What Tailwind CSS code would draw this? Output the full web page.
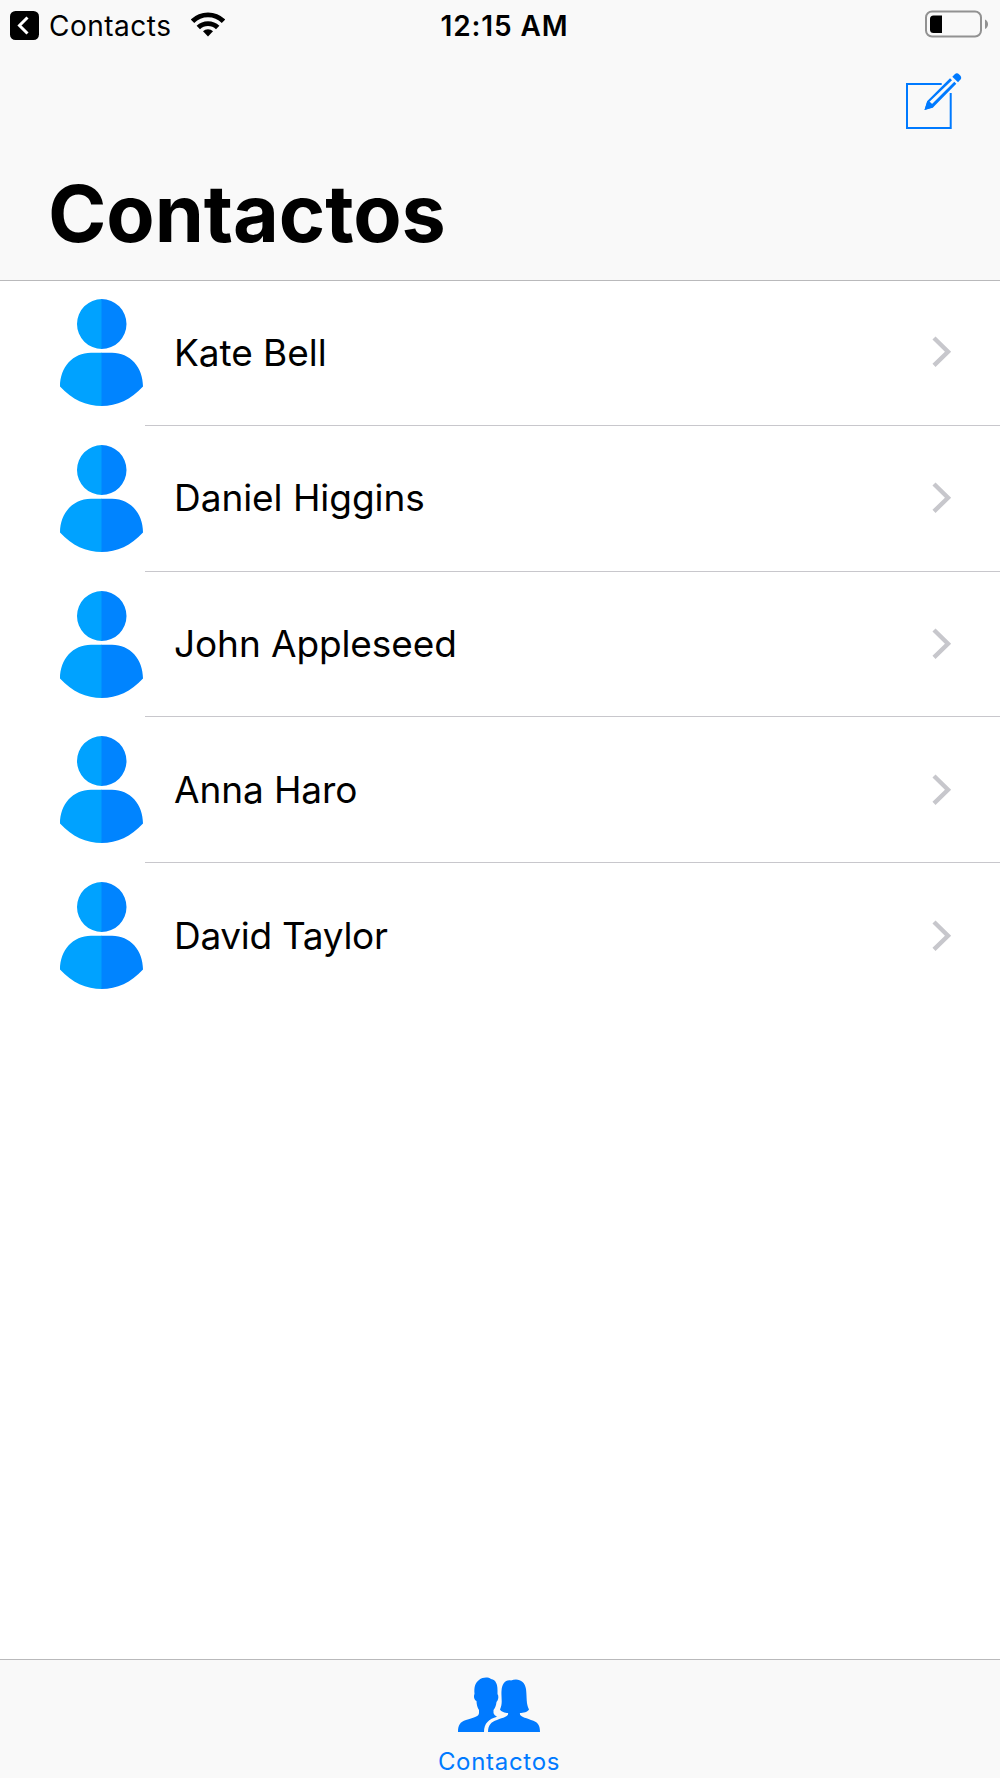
<!DOCTYPE html>
<html lang="es">
<head>
    <meta charset="UTF-8">
    <meta name="viewport" content="width=device-width, initial-scale=1.0">
    <title>Contactos</title>
    <script src="https://cdn.jsdelivr.net/npm/@tailwindcss/browser@4"></script>
</head>
<body class="bg-white text-black font-['Inter',sans-serif]">
<!-- shared icons -->
<svg class="hidden">
    <symbol id="avatar" viewBox="0 0 83 107">
        <path fill="#00a2ff" d="M42 0A25 25 0 0 0 42 50ZM42 53.7H31C13 53.7 0 68 0 87.5C12 100.500 26 107 42 107Z"/>
        <path fill="#0084ff" d="M41.500 0A25 25 0 0 1 41.500 50ZM41.500 53.700H52C70 53.700 83 68 83 87.500C71 100.500 57 107 41.500 107Z"/>
    </symbol>
    <symbol id="chevron" viewBox="0 0 20 32">
        <path d="M2 2L16 15.700L2 29.400" fill="none" stroke="#c7c7cc" stroke-width="4.400"/>
    </symbol>
</svg>
<div class="flex flex-col h-[1778px]">
    <header class="flex flex-col h-[281px] bg-[#f9f9f9] border-b border-[#b9b9bb]">
        <div class="grid grid-cols-3 items-center h-[51px] pl-[10px] pr-[12px]">
            <div class="flex items-center">
                <svg class="w-[29px] h-[29px]" viewBox="0 0 29 29">
                    <rect width="29" height="29" rx="5.500"/>
                    <path d="M17.500 6.500L9.500 14.500L17.500 22.500" fill="none" stroke="#fff" stroke-width="3"/>
                </svg>
                <span class="ml-[10px] text-[28px] leading-none tracking-[0.5px]">Contacts</span>
                <svg class="ml-[20px] w-[34px] h-[25px] -mt-[2px]" viewBox="0 0 34 25">
                    <g fill="none" stroke="#000" stroke-width="4.900">
                        <path d="M1.500 9.300A22 22 0 0 1 32.500 9.300"/>
                        <path d="M7.300 15.500A14 14 0 0 1 26.700 15.500"/>
                    </g>
                    <path d="M12 19.300A7 7 0 0 1 22 19.300L17 24.400Z"/>
                </svg>
            </div>
            <div class="text-center text-[28px] leading-none font-semibold tracking-[0.9px] pl-[11px]">12:15 AM</div>
            <svg class="justify-self-end w-[63px] h-[28px] -mt-[3px]" viewBox="0 0 63 28">
                <rect x="1" y="1.500" width="55" height="25" rx="6" fill="none" stroke="#929292" stroke-width="2"/>
                <path d="M17 5.500V23H8.500Q5 23 5 19.500V9Q5 5.500 8.500 5.500Z"/>
                <path d="M60 9.500C64 11 64 17.500 60 19Z" fill="#929292"/>
            </svg>
        </div>
        <div class="flex justify-end pt-[20px] pr-[36px]">
            <svg class="w-[60px] h-[60px]" viewBox="0 0 60 60" fill="#007aff">
                <path d="M37.700 13H3V57H46.700V22" fill="none" stroke="#007aff" stroke-width="2"/>
                <!-- pencil: body outline, tip, eraser -->
                <path fill-rule="evenodd" d="M46 7.300L23.300 30L20.500 39L28.700 36.700L52.300 12.800L50.300 10.800L28 33L25.500 30.800L48 9.300Z"/>
                <path d="M23.300 30L20.500 39L29.500 36L27 32Z"/>
                <path d="M48.300 5.700L51 3Q53 1.200 55.500 3.700Q58.300 6.500 56.500 8.500L54 11.200Z"/>
            </svg>
        </div>
        <h1 class="mt-[34px] ml-[48px] text-[79px] leading-[96px] font-bold tracking-[-0.1px]">Contactos</h1>
    </header>
    <main class="flex-1 -mt-px">
        <ul>
            <li class="flex h-[145.8px] pl-[60px]">
                <svg class="w-[83px] h-[107px] mt-[19px]"><use href="#avatar"/></svg>
                <div class="flex flex-1 items-center ml-[2px] pl-[29px] pr-[48px] border-b border-[#c8c7cc]">
                    <span class="flex-1 text-[37px] tracking-[-0.050px]">Kate Bell</span>
                    <svg class="w-[20px] h-[32px]"><use href="#chevron"/></svg>
                </div>
            </li>
            <li class="flex h-[145.8px] pl-[60px]">
                <svg class="w-[83px] h-[107px] mt-[19px]"><use href="#avatar"/></svg>
                <div class="flex flex-1 items-center ml-[2px] pl-[29px] pr-[48px] border-b border-[#c8c7cc]">
                    <span class="flex-1 text-[37px] tracking-[-0.050px]">Daniel Higgins</span>
                    <svg class="w-[20px] h-[32px]"><use href="#chevron"/></svg>
                </div>
            </li>
            <li class="flex h-[145.8px] pl-[60px]">
                <svg class="w-[83px] h-[107px] mt-[19px]"><use href="#avatar"/></svg>
                <div class="flex flex-1 items-center ml-[2px] pl-[29px] pr-[48px] border-b border-[#c8c7cc]">
                    <span class="flex-1 text-[37px] tracking-[-0.1px]">John Appleseed</span>
                    <svg class="w-[20px] h-[32px]"><use href="#chevron"/></svg>
                </div>
            </li>
            <li class="flex h-[145.8px] pl-[60px]">
                <svg class="w-[83px] h-[107px] mt-[19px]"><use href="#avatar"/></svg>
                <div class="flex flex-1 items-center ml-[2px] pl-[29px] pr-[48px] border-b border-[#c8c7cc]">
                    <span class="flex-1 text-[37px] tracking-[-0.1px]">Anna Haro</span>
                    <svg class="w-[20px] h-[32px]"><use href="#chevron"/></svg>
                </div>
            </li>
            <li class="flex h-[145.8px] pl-[60px]">
                <svg class="w-[83px] h-[107px] mt-[19px]"><use href="#avatar"/></svg>
                <div class="flex flex-1 items-center ml-[2px] pl-[29px] pr-[48px]">
                    <span class="flex-1 text-[37px] tracking-[-0.3px]">David Taylor</span>
                    <svg class="w-[20px] h-[32px]"><use href="#chevron"/></svg>
                </div>
            </li>
        </ul>
    </main>
    <nav class="flex flex-col items-center h-[119px] pt-[17px] pr-[2px] bg-[#f9f9f9] border-t border-[#b9b9bb] text-[#007aff]">
        <svg class="w-[83px] h-[56px]" viewBox="0 0 83 56" fill="currentColor">
            <path d="M0 55C0 48 2 45 8 43C15 40.500 21 40 21 36V33C19.500 31 18.500 27 18.500 24C16 23 15.500 19 16.500 17C16 10 17 6 21 3C25 0 30 0 33 2C38 3 40 7 39.500 17C41 19 40.500 23 38.500 25C38 29 37 31 35.500 33V36C36 38 37.500 39 39 39.700C31 42 26 46 26 55Z"/>
            <path d="M30 55C30 48 33 45 39 43C46 40.500 51 39.500 50 36C47 36 43 34.500 42 32.500C45 26 43 21 43.500 14C44 7 47 2.500 53 3.500C60 0.500 67 4 68 12C69 20 68 27 71 32.500C70 35 65 36 62 36C61 39.500 66 40.500 73 43C80 45 82 48 82 55Z"/>
        </svg>
        <span class="mt-[15px] text-[24px] leading-[28px] tracking-[0.7px]">Contactos</span>
    </nav>
</div>
</body>
</html>
